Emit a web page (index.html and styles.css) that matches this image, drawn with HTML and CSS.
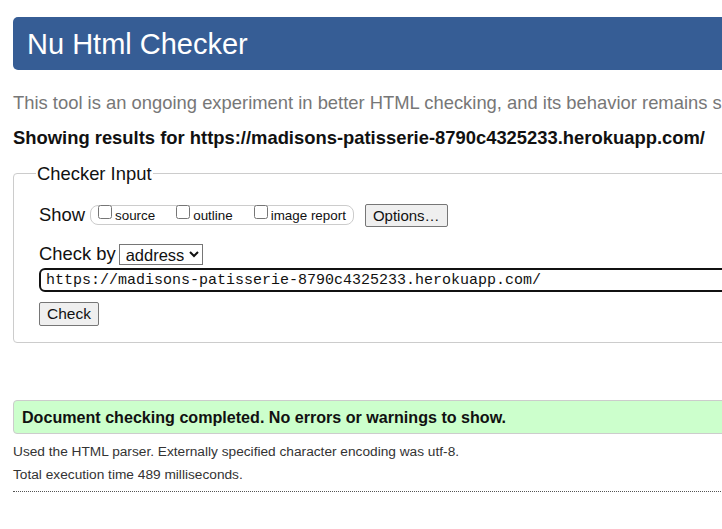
FILE: index.html
```html
<!DOCTYPE html>
<html lang="en">
<head>
<meta charset="utf-8">
<title>Nu Html Checker</title>
<link rel="stylesheet" href="styles.css">
</head>
<body>
<div class="page">
  <h1 class="header">Nu Html Checker</h1>
  <p class="intro">This tool is an ongoing experiment in better HTML checking, and its behavior remains subject to change</p>
  <p class="showing">Showing results for https://madisons-patisserie-8790c4325233.herokuapp.com/</p>
  <fieldset class="input-box">
    <legend class="legend">Checker Input</legend>
    <div class="row show-row">
      <span class="label">Show</span>
      <fieldset class="opts">
        <label class="opt"><input type="checkbox" class="cb"><span>source</span></label>
        <label class="opt"><input type="checkbox" class="cb"><span>outline</span></label>
        <label class="opt"><input type="checkbox" class="cb"><span>image report</span></label>
      </fieldset>
      <button class="btn options">Options…</button>
    </div>
    <div class="row checkby-row">
      <span class="label">Check by</span>
      <select class="sel"><option>address</option></select>
    </div>
    <div class="url-wrap">
      <input class="url" type="text" value="https://madisons-patisserie-8790c4325233.herokuapp.com/">
    </div>
    <div class="row">
      <button class="btn check">Check</button>
    </div>
  </fieldset>
  <p class="success">Document checking completed. No errors or warnings to show.</p>
  <p class="details">Used the HTML parser. Externally specified character encoding was utf-8.</p>
  <p class="details">Total execution time 489 milliseconds.</p>
  <hr class="rule">
</div>
</body>
</html>
```

FILE: styles.css
```css
html, body {
  margin: 0;
  padding: 0;
  overflow: hidden;
  background: #fff;
}
body {
  font-family: "Liberation Sans", Arial, sans-serif;
  color: #111;
}
.page {
  width: 1100px;
  padding: 17px 13px 0 13px;
}
.header {
  margin: 0;
  height: 53px;
  box-sizing: border-box;
  padding: 9px 14px 0 14px;
  background: #365d95;
  color: #fff;
  font-weight: normal;
  font-size: 29px;
  line-height: 36px;
  border-radius: 5px;
}
.intro {
  margin: 22px 0 0 0;
  color: #777;
  font-size: 18.4px;
  line-height: 22px;
  white-space: nowrap;
}
.showing {
  margin: 13px 0 0 0;
  font-weight: bold;
  font-size: 18.4px;
  line-height: 22px;
  white-space: nowrap;
}
.input-box {
  margin: 14px 0 0 0;
  border: 1px solid #ccc;
  border-radius: 4px;
  padding: 8px 24px 16px 25px;
  min-width: 0;
}
.legend {
  font-size: 18.4px;
  line-height: 21px;
  padding: 0 1px;
  margin-left: -3px;
}
.row {
  display: flex;
  align-items: center;
}
.label {
  font-size: 18.4px;
}
.show-row {
  margin-top: 11px;
  height: 24px;
}
.opts {
  display: flex;
  align-items: center;
  margin: 0 0 0 5px;
  padding: 0 7px 0 7px;
  height: 20px;
  box-sizing: border-box;
  border: 1px solid #ccc;
  border-radius: 8px;
  min-width: 0;
}
.opt {
  display: flex;
  align-items: center;
  font-size: 13.4px;
  margin-right: 21px;
}
.opt:last-child {
  margin-right: 0;
}
.cb {
  margin: 0 3px 6px 0;
  width: 14px;
  height: 14px;
}
.btn {
  font-family: "Liberation Sans", Arial, sans-serif;
  font-size: 15px;
  background: #efefef;
  border: 1px solid #767676;
  border-radius: 2px;
  color: #111;
  padding: 1px 7px;
  height: 23px;
}
.options {
  margin-left: 11px;
}
.checkby-row {
  margin-top: 16px;
}
.sel {
  margin-left: 3px;
  font-family: "Liberation Sans", Arial, sans-serif;
  font-size: 16.5px;
  height: 21px;
  width: 84px;
  padding: 0 2px;
  border: 1px solid #767676;
  border-radius: 0;
  background: #fff;
  color: #111;
}
.url-wrap {
  margin-top: 3px;
}
.url {
  box-sizing: border-box;
  width: 1100px;
  height: 24px;
  font-family: "Liberation Mono", "Courier New", monospace;
  font-size: 15px;
  padding: 0 5px;
  border: 2px solid #111;
  border-radius: 6px;
  color: #111;
  outline: none;
}
.check {
  margin-top: 10px;
  height: 24px;
  font-size: 15.5px;
  padding: 1px 7px;
}
.success {
  margin: 57px 0 0 0;
  background: #ccffcc;
  border: 1px solid #cccccc;
  border-radius: 4px;
  padding: 0 8px;
  height: 34px;
  box-sizing: border-box;
  line-height: 32px;
  font-size: 16.1px;
  font-weight: bold;
  color: #111;
}
.details {
  margin: 10px 0 0 0;
  font-size: 13.7px;
  line-height: 16px;
  color: #333;
}
.details + .details {
  margin-top: 7px;
}
.rule {
  margin: 8px 0 0 0;
  border: 0;
  border-top: 1px dotted #555;
  height: 0;
}
```
